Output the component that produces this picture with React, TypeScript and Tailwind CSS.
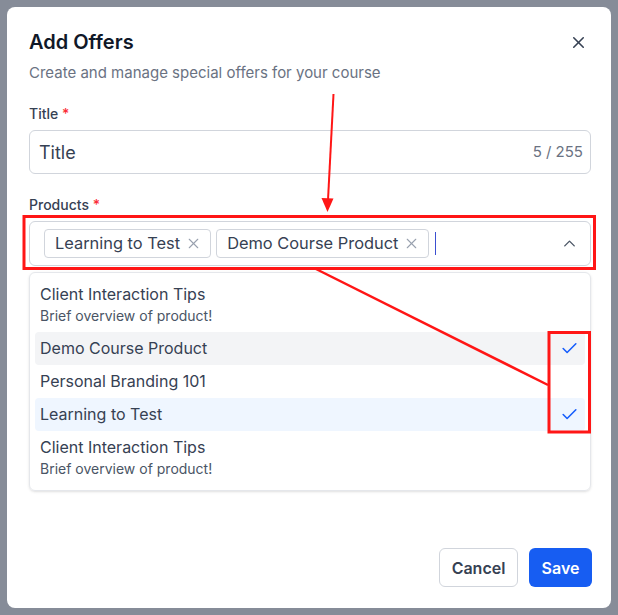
import { X, ChevronUp, Check } from "lucide-react";

const selected = ["Learning to Test", "Demo Course Product"];

type Option = {
  name: string;
  description?: string;
  state?: "active" | "selected" | "none";
};

const options: Option[] = [
  { name: "Client Interaction Tips", description: "Brief overview of product!" },
  { name: "Demo Course Product", state: "active" },
  { name: "Personal Branding 101" },
  { name: "Learning to Test", state: "selected" },
  { name: "Client Interaction Tips", description: "Brief overview of product!" },
];

function Annotations() {
  return (
    <svg className="pointer-events-none absolute inset-0" width="618" height="615" viewBox="0 0 618 615">
      <line x1="333.5" y1="94" x2="328" y2="200" stroke="#ff1616" strokeWidth="2" />
      <polygon points="321.5,198 333.5,198.5 327.5,212" fill="#ff1616" />
      <rect x="24" y="216.5" width="570.5" height="52" fill="none" stroke="#ff1616" strokeWidth="3" />
      <line x1="316" y1="269" x2="548" y2="385" stroke="#ff1616" strokeWidth="2.5" />
      <rect x="549" y="332.5" width="40.5" height="99.5" fill="none" stroke="#ff1616" strokeWidth="3" />
    </svg>
  );
}

export default function App() {
  return (
    <div className="relative h-[615px] w-full bg-[#868c98] p-[7px] font-['Inter',sans-serif]">
      <div className="flex h-[601px] flex-col rounded-lg bg-white pb-[21px] pl-[22px] pr-[20px] pt-[21px]">
        <div className="flex items-center justify-between">
          <h2 className="text-[20px] font-semibold leading-[28px] text-gray-900">Add Offers</h2>
          <X className="mr-[3px] text-gray-700" size={19} strokeWidth={2} />
        </div>
        <p className="mt-[6px] text-[15px] leading-[22px] text-gray-500">
          Create and manage special offers for your course
        </p>

        <label className="mt-[20px] block text-[14px] font-medium leading-[20px] text-gray-700">
          Title <span className="text-red-500">*</span>
        </label>
        <div className="mt-[6px] flex h-[44px] items-center justify-between rounded-md border border-gray-300 pl-[9px] pr-[7px]">
          <span className="text-[18px] text-gray-700">Title</span>
          <span className="text-[15px] text-gray-500">5 / 255</span>
        </div>

        <label className="mt-[21px] block text-[14px] font-medium leading-[20px] text-gray-700">
          Products <span className="text-red-500">*</span>
        </label>
        <div className="mt-[6px] flex h-[45px] items-center rounded-md border border-gray-300 pl-[14px] pr-[11px]">
          <div className="flex flex-1 items-center gap-[5px]">
            {selected.map((s) => (
              <span
                key={s}
                className="flex h-[29px] items-center gap-[5px] rounded border border-gray-300 pl-[10px] pr-[8px] text-[16.4px] text-gray-700"
              >
                {s}
                <X className="text-gray-400" size={17} strokeWidth={1.5} />
              </span>
            ))}
            <span className="ml-[1px] h-[23px] w-px bg-[#3b4fd0]" />
          </div>
          <ChevronUp className="text-gray-600" size={19} strokeWidth={1.75} />
        </div>

        <div className="mt-[6px] rounded-md border border-gray-200 px-[5px] py-[5px] shadow-sm">
          {options.map((o, i) => (
            <div
              key={i}
              className={`flex items-center justify-between rounded px-[5px] ${o.description ? "h-[54px]" : "h-[33px]"} ${
                o.state === "active" ? "bg-gray-100" : o.state === "selected" ? "bg-blue-50" : ""
              }`}
            >
              <div className="flex flex-col">
                <span className="text-[16px] leading-[21px] text-gray-700">{o.name}</span>
                {o.description && (
                  <span className="text-[14px] leading-[21px] text-gray-600">{o.description}</span>
                )}
              </div>
              {o.state && o.state !== "none" && (
                <Check className="mr-[1px] text-blue-600" size={19} strokeWidth={2} />
              )}
            </div>
          ))}
        </div>

        <div className="-mr-px mt-auto flex justify-end gap-[11px]">
          <button className="h-[39px] w-[79px] rounded-md border border-gray-300 text-[16px] font-semibold text-gray-700">
            Cancel
          </button>
          <button className="h-[39px] w-[63px] rounded-md bg-[#175df2] text-[16px] font-semibold text-white">
            Save
          </button>
        </div>
      </div>
      <Annotations />
    </div>
  );
}
